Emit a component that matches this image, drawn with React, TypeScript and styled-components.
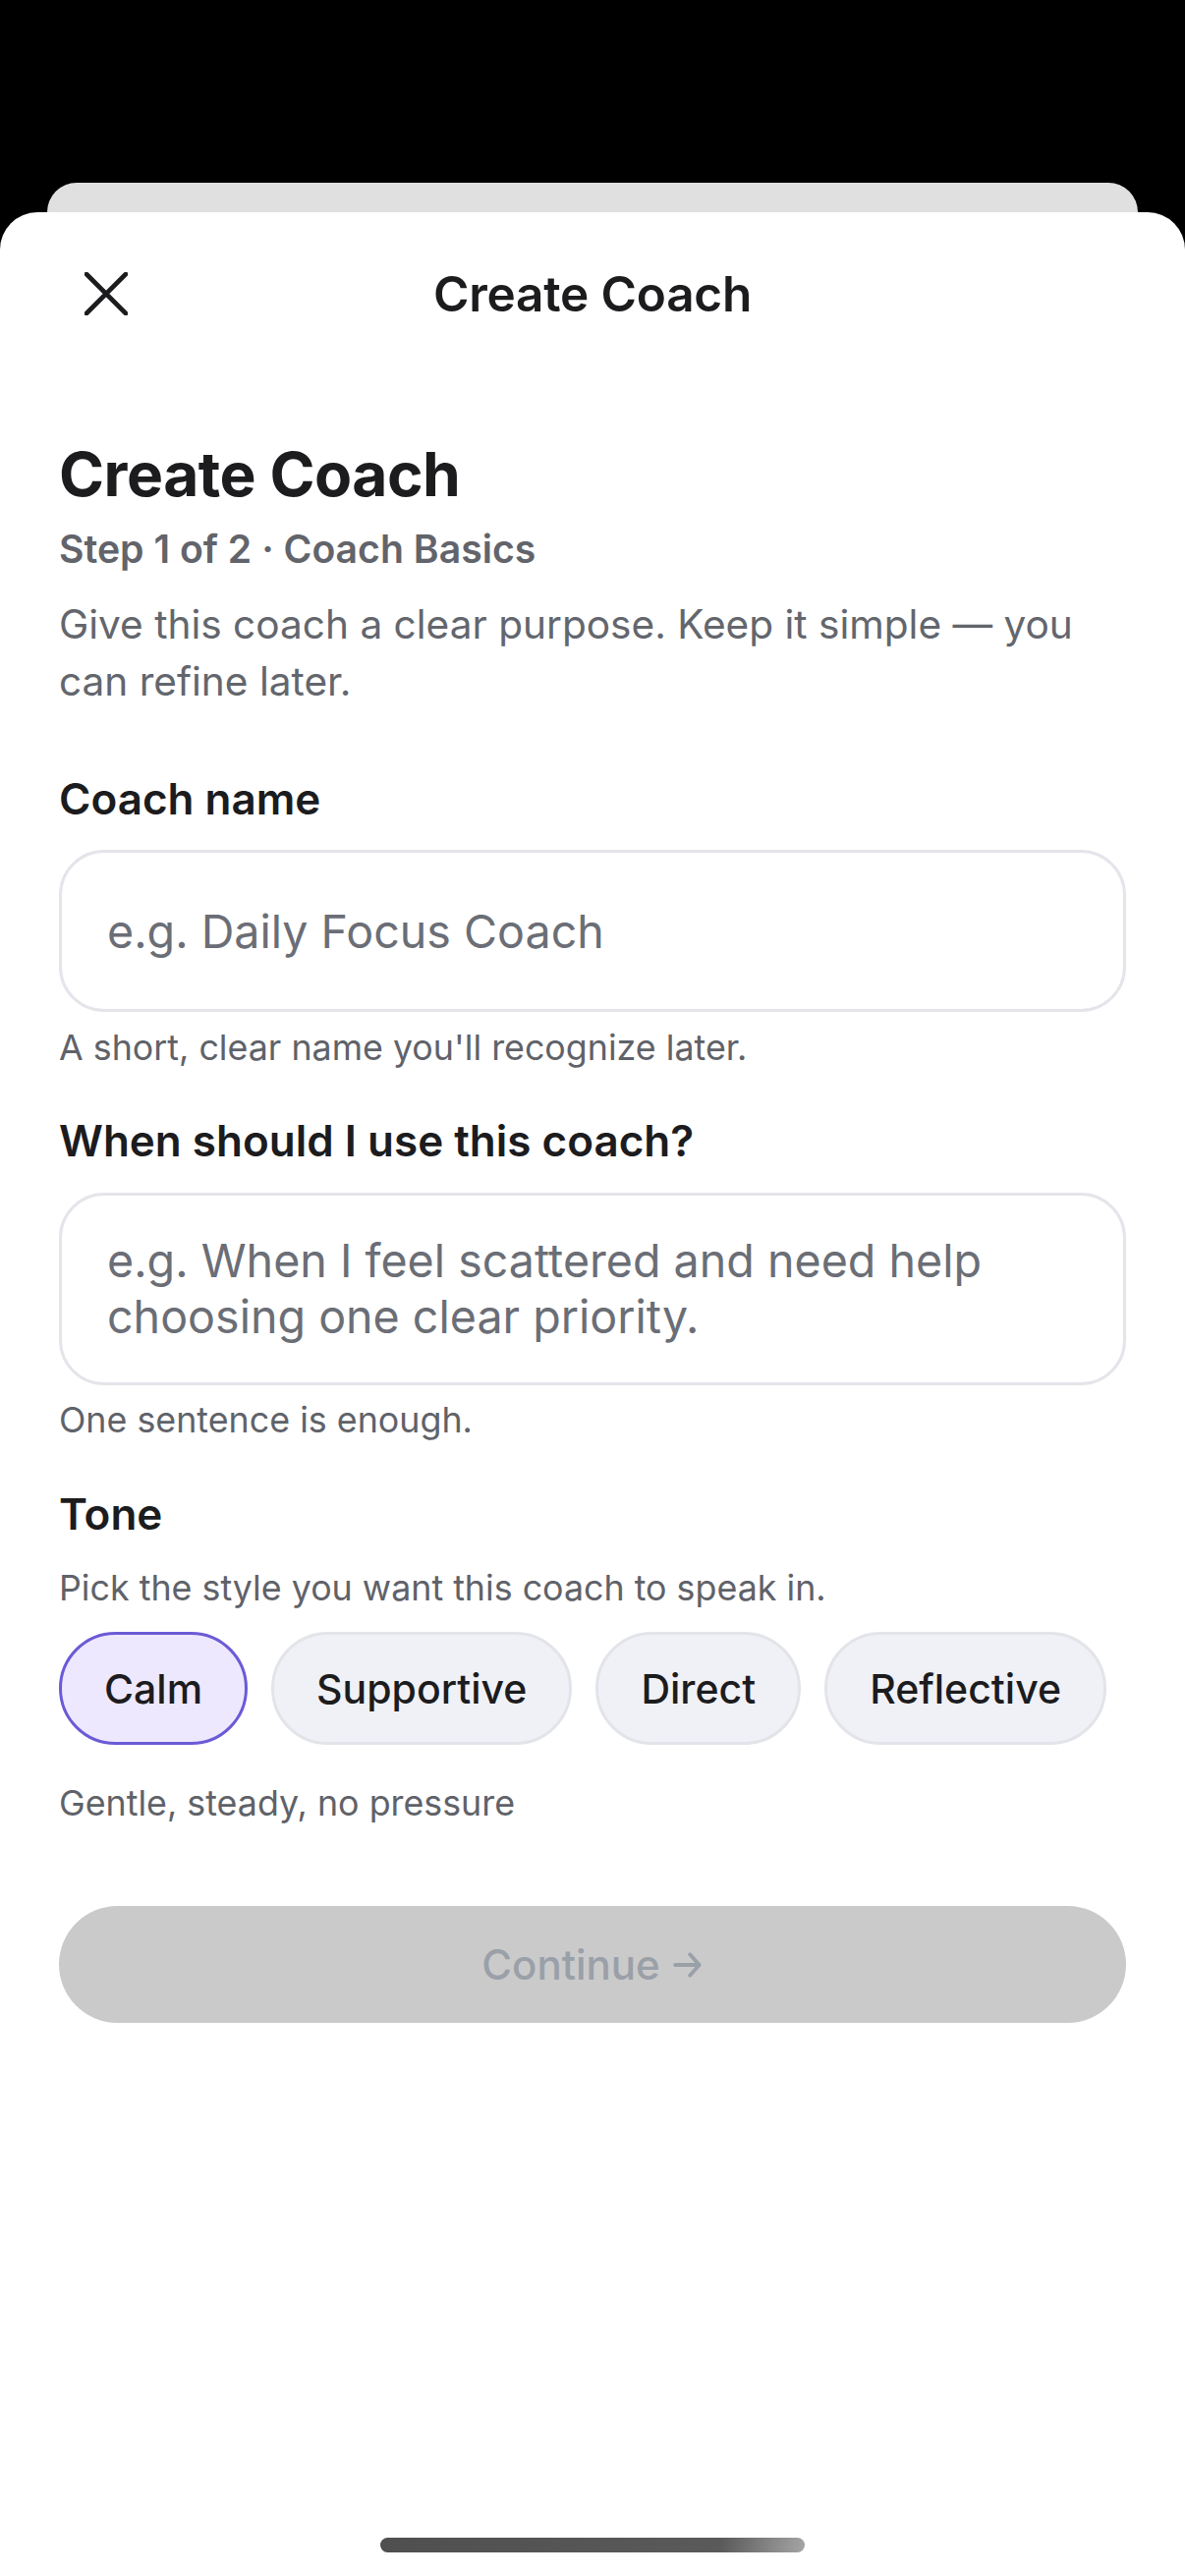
import React, { useState } from "react";
import styled, { createGlobalStyle } from "styled-components";

const GlobalStyle = createGlobalStyle`
  html, body {
    margin: 0;
    padding: 0;
    background: #000000;
  }
  body {
    font-family: Inter, "Noto Sans", "Liberation Sans", sans-serif;
    -webkit-font-smoothing: antialiased;
  }
  * { box-sizing: border-box; }
`;

const Screen = styled.div`
  width: 1206px;
  min-height: 2622px;
  background: #000000;
  display: flex;
  flex-direction: column;
  padding-top: 186px;
`;

const BackSheet = styled.div`
  height: 30px;
  margin: 0 48px;
  background: #e0e0e0;
  border-radius: 30px 30px 0 0;
`;

const Sheet = styled.div`
  flex: 1;
  background: #ffffff;
  border-radius: 38px 38px 0 0;
  display: flex;
  flex-direction: column;
`;

const Header = styled.header`
  height: 166px;
  display: grid;
  grid-template-columns: 1fr auto 1fr;
  align-items: center;
  padding: 0 60px;
`;

const CloseButton = styled.button`
  justify-self: start;
  margin-left: 26px;
  width: 44px;
  height: 44px;
  padding: 0;
  border: none;
  background: transparent;
  display: flex;
  align-items: center;
  justify-content: center;
  cursor: pointer;
`;

const HeaderTitle = styled.h1`
  margin: 0;
  font-size: 49.5px;
  font-weight: 600;
  color: #1c1c1e;
  letter-spacing: -0.2px;
`;

const Content = styled.main`
  padding: 0 60px;
  display: flex;
  flex-direction: column;
`;

const PageTitle = styled.h2`
  margin: 64px 0 0;
  font-size: 62.3px;
  line-height: 74px;
  font-weight: 700;
  color: #1c1c1e;
  letter-spacing: -0.5px;
`;

const StepText = styled.div`
  margin-top: 16px;
  font-size: 39.2px;
  line-height: 46px;
  font-weight: 600;
  color: #62646b;
`;

const Description = styled.p`
  margin: 25px 0 0;
  font-size: 40.6px;
  line-height: 58px;
  font-weight: 400;
  color: #63666d;
`;

const Label = styled.label<{ $gap: number }>`
  display: block;
  margin-top: ${(p) => p.$gap}px;
  font-size: 44px;
  line-height: 52px;
  font-weight: 600;
  color: #1c1c1e;
`;

const fieldBase = `
  width: 100%;
  border: 3px solid #e4e4ea;
  background: #ffffff;
  font-family: Inter, "Noto Sans", "Liberation Sans", sans-serif;
  font-size: 46.6px;
  color: #1c1c1e;
  outline: none;
  &::placeholder {
    color: #6b6e76;
    opacity: 1;
  }
`;

const TextInput = styled.input`
  ${fieldBase}
  margin-top: 26px;
  height: 165px;
  border-radius: 46px;
  padding: 0 46px;
`;

const TextArea = styled.textarea`
  ${fieldBase}
  margin-top: 27px;
  height: 196px;
  border-radius: 46px;
  padding: 38px 46px;
  line-height: 57px;
  resize: none;
  overflow: hidden;
  display: block;
`;

const Helper = styled.div<{ $gap: number }>`
  margin-top: ${(p) => p.$gap}px;
  font-size: 35.8px;
  line-height: 44px;
  color: #5f6269;
`;

const PillRow = styled.div`
  margin-top: 23px;
  display: flex;
  gap: 24px;
`;

const Pill = styled.button<{ $selected: boolean }>`
  height: 115px;
  padding: 0 43px;
  border-radius: 58px;
  border: 3px solid ${(p) => (p.$selected ? "#6a5bd6" : "#e3e4ea")};
  background: ${(p) => (p.$selected ? "#eee8ff" : "#f0f1f6")};
  font-family: Inter, "Noto Sans", "Liberation Sans", sans-serif;
  font-size: 41px;
  font-weight: 500;
  color: #1c1c1e;
  cursor: pointer;
`;

const ContinueButton = styled.button`
  margin-top: 83px;
  height: 119px;
  width: 100%;
  border: none;
  border-radius: 60px;
  background: #cacaca;
  font-family: Inter, "Noto Sans", "Liberation Sans", sans-serif;
  font-size: 42px;
  font-weight: 500;
  color: #9aa0a8;
  display: flex;
  align-items: center;
  justify-content: center;
  gap: 12px;
`;

const HomeIndicator = styled.div`
  margin: auto auto 24px;
  width: 432px;
  height: 15px;
  border-radius: 8px;
  background: linear-gradient(100deg, #4f4f4f 0%, #5a5a5a 80%, #a5a5a5 100%);
`;

const tones = [
  { key: "calm", label: "Calm", hint: "Gentle, steady, no pressure" },
  { key: "supportive", label: "Supportive", hint: "Warm, encouraging, kind" },
  { key: "direct", label: "Direct", hint: "Clear, honest, to the point" },
  { key: "reflective", label: "Reflective", hint: "Thoughtful, curious, deep" },
];

const CloseIcon = () => (
  <svg width="44" height="44" viewBox="0 0 44 44" fill="none">
    <path
      d="M2 2 L42 42 M42 2 L2 42"
      stroke="#1c1c1e"
      strokeWidth="4.6"
      strokeLinecap="round"
    />
  </svg>
);

const ArrowIcon = () => (
  <svg width="32" height="32" viewBox="0 0 30 30" fill="none">
    <path
      d="M3 15 H26 M17 5 L26 15 L17 25"
      stroke="#9aa0a8"
      strokeWidth="3.6"
      strokeLinecap="round"
      strokeLinejoin="round"
    />
  </svg>
);

export default function App() {
  const [tone, setTone] = useState("calm");
  const current = tones.find((t) => t.key === tone)!;
  return (
    <>
      <GlobalStyle />
      <Screen>
        <BackSheet />
        <Sheet>
          <Header>
            <CloseButton aria-label="Close">
              <CloseIcon />
            </CloseButton>
            <HeaderTitle>Create Coach</HeaderTitle>
            <span />
          </Header>
          <Content>
            <PageTitle>Create Coach</PageTitle>
            <StepText>Step 1 of 2 · Coach Basics</StepText>
            <Description>
              Give this coach a clear purpose. Keep it simple — you can refine later.
            </Description>

            <Label $gap={64}>Coach name</Label>
            <TextInput placeholder="e.g. Daily Focus Coach" />
            <Helper $gap={14}>A short, clear name you'll recognize later.</Helper>

            <Label $gap={47}>When should I use this coach?</Label>
            <TextArea
              rows={2}
              placeholder="e.g. When I feel scattered and need help choosing one clear priority."
            />
            <Helper $gap={13}>One sentence is enough.</Helper>

            <Label $gap={48}>Tone</Label>
            <Helper $gap={27}>Pick the style you want this coach to speak in.</Helper>
            <PillRow>
              {tones.map((t) => (
                <Pill
                  key={t.key}
                  $selected={t.key === tone}
                  onClick={() => setTone(t.key)}
                >
                  {t.label}
                </Pill>
              ))}
            </PillRow>
            <Helper $gap={37}>{current.hint}</Helper>

            <ContinueButton disabled>
              Continue <ArrowIcon />
            </ContinueButton>
          </Content>
          <HomeIndicator />
        </Sheet>
      </Screen>
    </>
  );
}
